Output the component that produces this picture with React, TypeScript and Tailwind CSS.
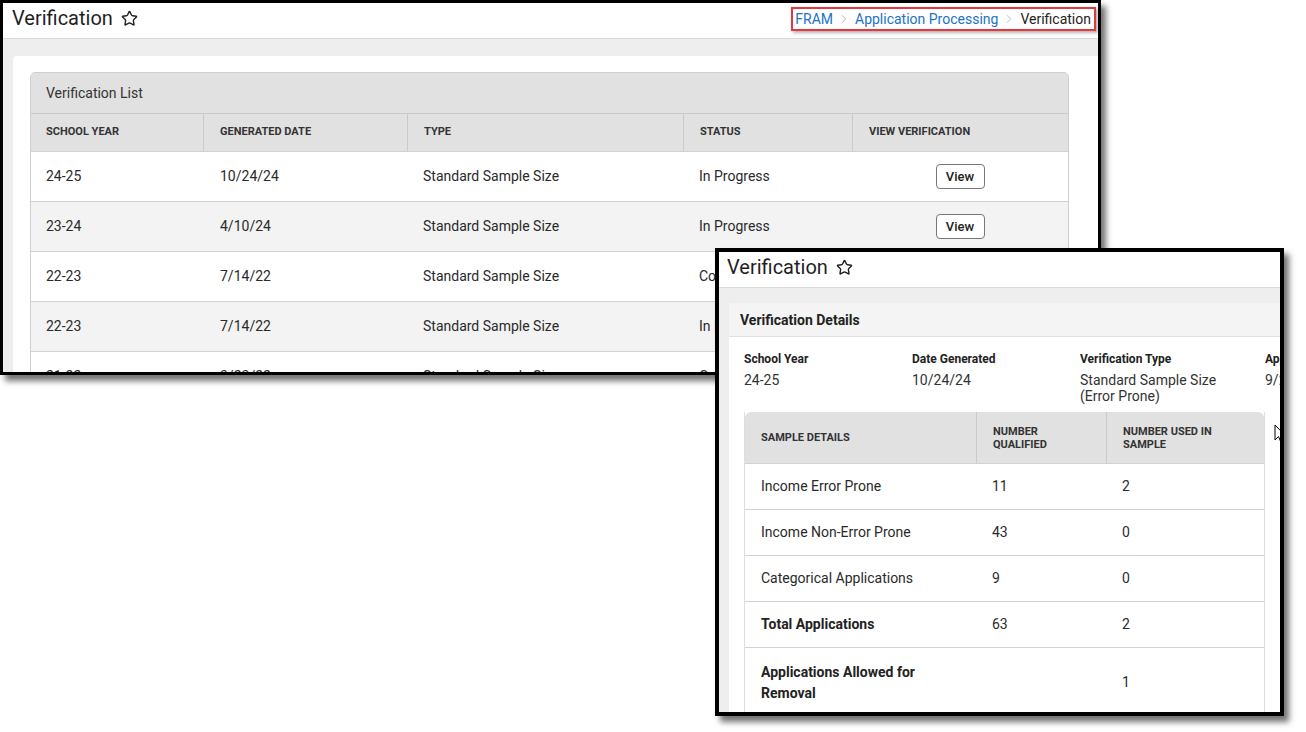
import { Star, ChevronRight } from 'lucide-react'

const listRows = [
  { year: '24-25', date: '10/24/24', type: 'Standard Sample Size', status: 'In Progress' },
  { year: '23-24', date: '4/10/24', type: 'Standard Sample Size', status: 'In Progress' },
  { year: '22-23', date: '7/14/22', type: 'Standard Sample Size', status: 'Complete' },
  { year: '22-23', date: '7/14/22', type: 'Standard Sample Size', status: 'In Progress' },
  { year: '21-22', date: '3/23/22', type: 'Standard Sample Size', status: 'Complete' },
]

const sampleRows = [
  { label: 'Income Error Prone', qualified: '11', used: '2' },
  { label: 'Income Non-Error Prone', qualified: '43', used: '0' },
  { label: 'Categorical Applications', qualified: '9', used: '0' },
  { label: 'Total Applications', qualified: '63', used: '2', bold: true },
]

const fields: { label: string; values: string[]; width: string }[] = [
  { label: 'School Year', values: ['24-25'], width: 'w-[168px]' },
  { label: 'Date Generated', values: ['10/24/24'], width: 'w-[168px]' },
  { label: 'Verification Type', values: ['Standard Sample Size', '(Error Prone)'], width: 'w-[185px]' },
  { label: 'Application Date', values: ['9/24/24'], width: 'w-[168px]' },
]

const font = { fontFamily: 'Roboto, "Liberation Sans", sans-serif' }

function PageTitle() {
  return (
    <div className="flex items-center gap-[8px] pb-[5px]">
      <h1 className="text-[20px] leading-none text-[#1f1f1f]">Verification</h1>
      <Star className="h-[17px] w-[17px] text-[#222]" strokeWidth={2} />
    </div>
  )
}

function ListWindow() {
  return (
    <div className="w-[1101px] h-[375px] border-[3px] border-black overflow-hidden bg-[#eeeeee] shadow-[5px_6px_6px_rgba(0,0,0,0.55)] flex flex-col">
      <header className="h-[36px] shrink-0 bg-white border-b border-[#dadada] flex items-center justify-between pl-[9px] pr-[2px]">
        <PageTitle />
        <nav className="h-[24px] mb-[3px] border-2 border-[#e5383e] shadow-[2px_2px_3px_rgba(0,0,0,0.3)] flex items-center gap-[4px] pl-[2px] pr-[3px] text-[14px] whitespace-nowrap">
          <span className="text-[#1a73c9]">FRAM</span>
          <ChevronRight className="h-[14px] w-[14px] shrink-0 text-[#b5b5b5]" strokeWidth={1.5} />
          <span className="text-[#1a73c9]">Application Processing</span>
          <ChevronRight className="h-[14px] w-[14px] shrink-0 text-[#b5b5b5]" strokeWidth={1.5} />
          <span className="text-[#222]">Verification</span>
        </nav>
      </header>

      <div className="flex-1 pt-[17px] pl-[10px]">
        <div className="h-full bg-white rounded-tl-[4px] pt-[16px] pl-[17px]">
          <div className="w-[1039px] rounded-t-[5px] border border-[#cfcfcf] overflow-hidden">
            <div className="h-[40px] bg-[#e1e1e1] flex items-center pl-[15px] text-[14px] text-[#333]">
              Verification List
            </div>
            <div className="h-[38px] bg-[#e1e1e1] border-t border-[#cacaca] grid grid-cols-[172px_204px_276px_169px_1fr] text-[11px] font-bold text-[#333] uppercase">
              <div className="flex items-center pl-[15px]">School Year</div>
              <div className="flex items-center pl-[16px] border-l border-[#cacaca]">Generated Date</div>
              <div className="flex items-center pl-[16px] border-l border-[#cacaca]">Type</div>
              <div className="flex items-center pl-[16px] border-l border-[#cacaca]">Status</div>
              <div className="flex items-center pl-[16px] border-l border-[#cacaca]">View Verification</div>
            </div>
            {listRows.map((r, i) => (
              <div
                key={i}
                className={`h-[50px] border-t border-[#d2d2d2] grid grid-cols-[172px_204px_276px_169px_1fr] items-center text-[14px] text-[#2a2a2a] ${i % 2 === 1 ? 'bg-[#f3f3f3]' : 'bg-white'}`}
              >
                <div className="pl-[15px]">{r.year}</div>
                <div className="pl-[17px]">{r.date}</div>
                <div className="pl-[16px]">{r.type}</div>
                <div className="pl-[16px]">{r.status}</div>
                <div className="flex justify-center">
                  <button className="h-[25px] w-[49px] rounded-[4px] border border-[#777] bg-white text-[13px] font-medium text-[#222]">
                    View
                  </button>
                </div>
              </div>
            ))}
          </div>
        </div>
      </div>
    </div>
  )
}

function DetailsWindow() {
  return (
    <div className="absolute left-[715px] top-[248px] w-[569px] h-[468px] border-[4px] border-black overflow-hidden bg-[#eeeeee] shadow-[5px_6px_6px_rgba(0,0,0,0.55)] flex flex-col">
      <header className="h-[36px] shrink-0 bg-white border-b border-[#dadada] flex items-center pl-[8px]">
        <PageTitle />
      </header>

      <div className="flex-1 pt-[15px] pl-[10px]">
        <div className="w-[700px] h-full bg-white">
          <div className="h-[34px] bg-[#f4f4f4] border-b border-[#e0e0e0] flex items-center pl-[11px] pt-[2px] text-[14px] font-bold text-[#222]">
            Verification Details
          </div>
          <div className="pl-[15px] pt-[15px]">
            <div className="flex">
              {fields.map(f => (
                <div key={f.label} className={`${f.width} shrink-0 whitespace-nowrap`}>
                  <div className="text-[12px] leading-[15px] font-bold text-[#222]">{f.label}</div>
                  <div className="mt-[5px] text-[14px] leading-[16px] text-[#333]">
                    {f.values.map(v => (
                      <div key={v}>{v}</div>
                    ))}
                  </div>
                </div>
              ))}
            </div>

            <div className="mt-[8px] w-[521px] border-x border-[#dedede]">
              <div className="h-[51px] bg-[#e1e1e1] rounded-t-[6px] grid grid-cols-[231px_130px_1fr] text-[11px] leading-[13px] font-bold uppercase text-[#333]">
                <div className="flex items-center pl-[16px]">Sample Details</div>
                <div className="flex items-center pl-[16px] pr-[20px] border-l border-[#cacaca]">Number Qualified</div>
                <div className="flex items-center pl-[16px] pr-[20px] border-l border-[#cacaca]">Number Used in Sample</div>
              </div>
              {sampleRows.map(r => (
                <div key={r.label} className="h-[46px] border-t border-[#d2d2d2] grid grid-cols-[231px_130px_1fr] items-center text-[14px] text-[#2a2a2a]">
                  <div className={`pl-[16px] ${r.bold ? 'font-bold text-[#222]' : ''}`}>{r.label}</div>
                  <div className="pl-[16px]">{r.qualified}</div>
                  <div className="pl-[16px]">{r.used}</div>
                </div>
              ))}
              <div className="h-[70px] border-t border-[#d2d2d2] grid grid-cols-[231px_130px_1fr] items-center text-[14px] text-[#2a2a2a]">
                <div className="pl-[16px] pr-[60px] font-bold leading-[21px] text-[#222]">Applications Allowed for Removal</div>
                <div />
                <div className="pl-[16px]">1</div>
              </div>
            </div>
          </div>
        </div>
      </div>

      <svg className="absolute left-[555px] top-[172px] h-[20px] w-[13px]" viewBox="0 0 13 20">
        <path d="M1 1 L1 16 L4.5 12.5 L7 18.5 L9.3 17.5 L6.8 11.8 L11.5 11.8 Z" fill="white" stroke="black" strokeWidth="1" strokeLinejoin="round" />
      </svg>
    </div>
  )
}

export default function App() {
  return (
    <div className="relative w-[1306px] h-[732px] bg-white overflow-hidden" style={font}>
      <ListWindow />
      <DetailsWindow />
    </div>
  )
}
